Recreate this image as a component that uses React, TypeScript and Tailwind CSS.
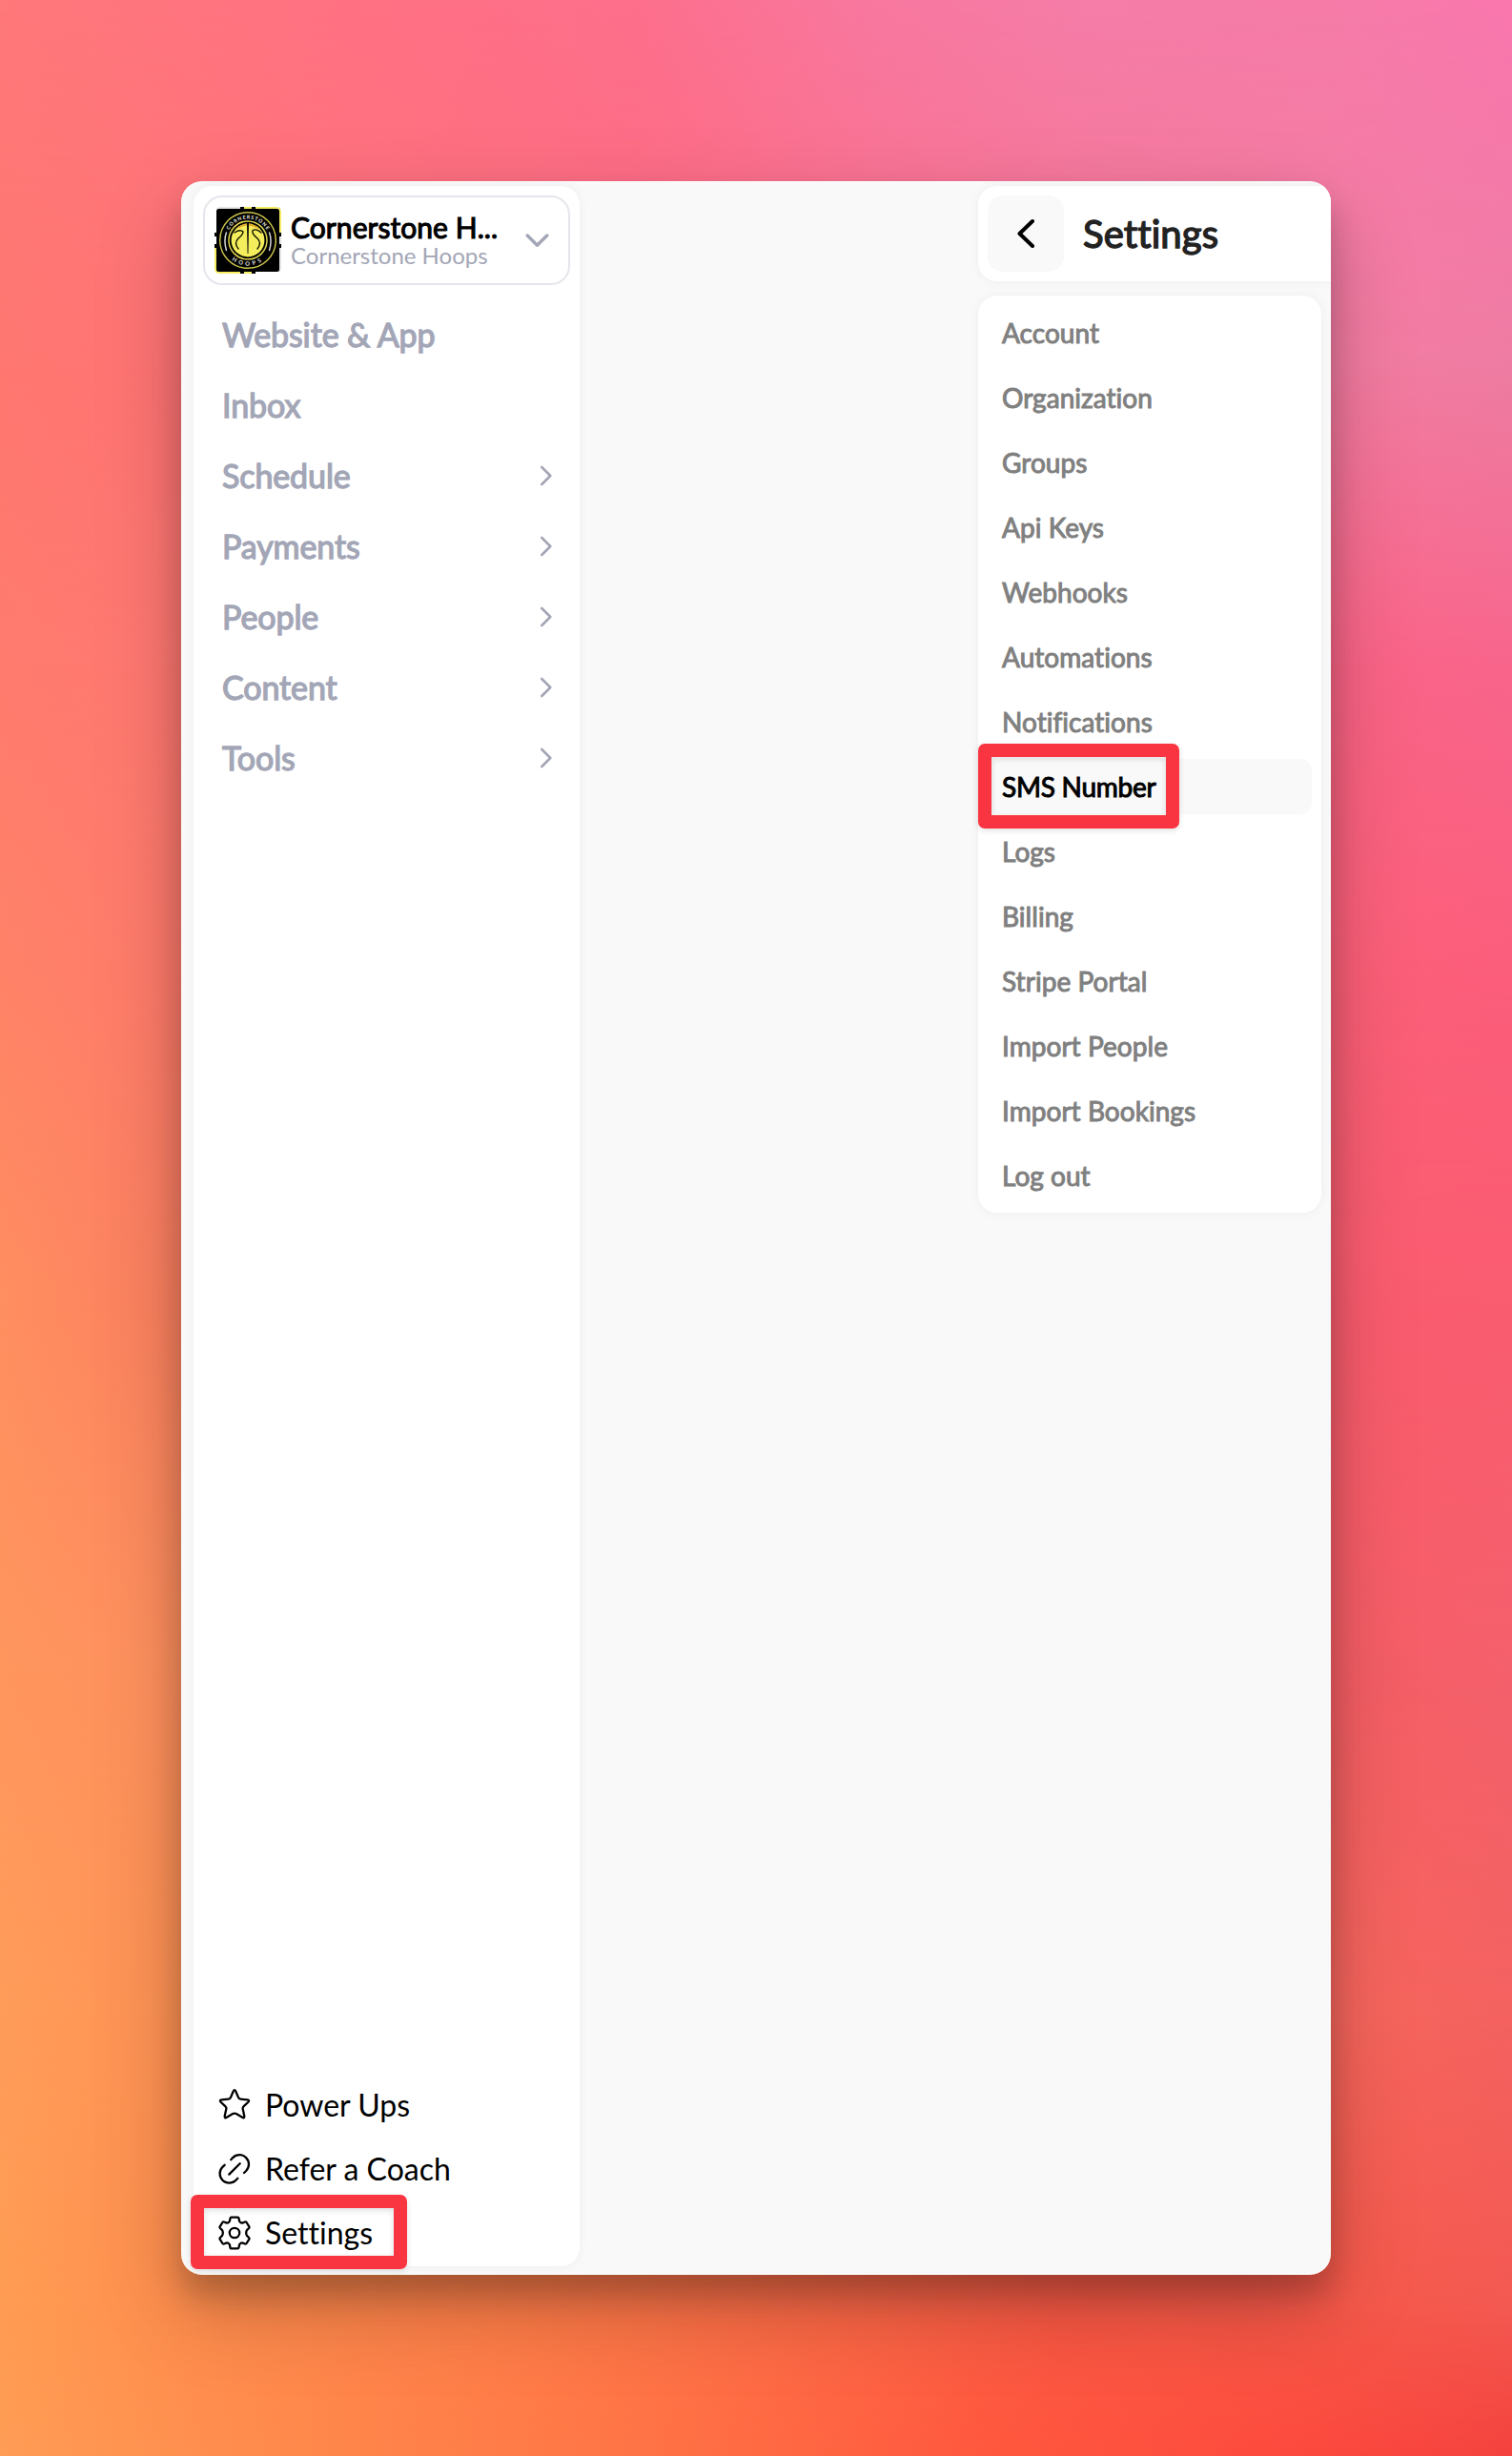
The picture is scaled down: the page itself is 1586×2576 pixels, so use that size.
import type { ReactNode } from "react";

const navItems: { label: string; expandable?: boolean }[] = [
  { label: "Website & App" },
  { label: "Inbox" },
  { label: "Schedule", expandable: true },
  { label: "Payments", expandable: true },
  { label: "People", expandable: true },
  { label: "Content", expandable: true },
  { label: "Tools", expandable: true },
];

const settingsItems = [
  "Account",
  "Organization",
  "Groups",
  "Api Keys",
  "Webhooks",
  "Automations",
  "Notifications",
  "SMS Number",
  "Logs",
  "Billing",
  "Stripe Portal",
  "Import People",
  "Import Bookings",
  "Log out",
];

/* Stacked horizontal gradients, each faded in vertically over the one before. */
function Backdrop() {
  return (
    <div aria-hidden className="absolute inset-0 bg-[linear-gradient(to_right,#ff787a,#ff7184_25%,#fd6f8c_42%,#f878a0_58%,#f57da8_72%,#f67ca8_88%,#fa77ae)]">
      <div className="absolute inset-0 bg-[linear-gradient(to_right,#ff7770,#ff7376_15%,#ff6a80_45%,#f5789a_80%,#f47ca2_88%,#ee7ca2)] [mask-image:linear-gradient(transparent_0%,#000_15%)]" />
      <div className="absolute inset-0 bg-[linear-gradient(to_right,#ff7b6e,#ff7872_12%,#fb6486_88%,#f8658c)] [mask-image:linear-gradient(transparent_15%,#000_27%)]" />
      <div className="absolute inset-0 bg-[linear-gradient(to_right,#ff8268,#ff7a6c_12%,#fc6078_88%,#fb5e7c)] [mask-image:linear-gradient(transparent_27%,#000_39%)]" />
      <div className="absolute inset-0 bg-[linear-gradient(to_right,#ff8e60,#fc8060_12%,#fa5c6e_88%,#fa5c70)] [mask-image:linear-gradient(transparent_39%,#000_53%)]" />
      <div className="absolute inset-0 bg-[linear-gradient(to_right,#ff965e,#ff905e_12%,#f65e64_88%,#f4606c)] [mask-image:linear-gradient(transparent_53%,#000_68%)]" />
      <div className="absolute inset-0 bg-[linear-gradient(to_right,#ff9c5a,#ff9254_12%,#f7665c_88%,#f46260)] [mask-image:linear-gradient(transparent_68%,#000_82%)]" />
      <div className="absolute inset-0 bg-[linear-gradient(to_right,#ff9c52,#ff8e4e_12%,#ff7c48_35%,#fa5844_70%,#f65848_88%,#f35850)] [mask-image:linear-gradient(transparent_82%,#000_95%)]" />
      <div className="absolute inset-0 bg-[linear-gradient(to_right,#ff9c55,#ff8a4c_18%,#ff7446_42%,#ff583e_65%,#fd4a3e_85%,#f4423e)] [mask-image:linear-gradient(transparent_94%,#000_100%)]" />
    </div>
  );
}

function OrgLogo() {
  return (
    <svg viewBox="0 0 70 70" className="size-[70px] shrink-0">
      <rect x="2" y="0" width="68" height="68" rx="4" fill="#e4e4ea" />
      <path d="M28 0H64Q70 0 70 6V27H60V8H28Z" fill="#f5ee62" />
      <path d="M0 43H10V62H42V70H6Q0 70 0 64Z" fill="#f5ee62" />
      <rect x="2" y="2" width="66" height="66" rx="2.5" fill="#000" />
      <path d="M27 0h4v3h-4zM39 0h4v3h-4zM27 67h4v3h-4zM39 67h4v3h-4zM0 27h3v4H0zM0 39h3v4H0zM67 27h3v4h-3zM67 39h3v4h-3z" fill="#000" />
      <path d="M31 0h8v2h-8zM31 68h8v2h-8z" fill="#f5ee62" />
      <circle cx="35" cy="35" r="29.3" fill="none" stroke="#c9c24a" strokeWidth="1.5" />
      <circle cx="35" cy="35" r="20" fill="none" stroke="#d8d04e" strokeWidth="1.5" />
      <circle cx="35" cy="35" r="17.4" fill="#f5ee5c" />
      <path d="M22 23Q35 12 48 23L44 22Q35 17 26 22Z" fill="#e0a92c" />
      <path d="M34 16H36L35.400 49H34.600Z" fill="#000" />
      <path d="M21 27Q27 23 30 26Q30 29 25 33Q20 38 25 44M49 27Q43 22 40 25Q39 28 45 33Q50 38 45 44" fill="none" stroke="#141400" strokeWidth="1.4" strokeLinecap="round" />
      <path d="M12.4 27Q9.5 35 12.4 45.500M57.600 27Q60.500 35 57.600 45.500" fill="none" stroke="#d4d4d4" strokeWidth="1.500" strokeLinecap="round" />
      <path id="logo-top" d="M12.500 35A22.500 22.500 0 0 1 57.500 35" fill="none" />
      <path id="logo-bottom" d="M8.500 35A26.500 26.500 0 0 0 61.500 35" fill="none" />
      <text fill="#e4e4de" fontSize="5.200" fontWeight="900" fontFamily="Lato, sans-serif" textAnchor="middle" textLength="48" lengthAdjust="spacing">
        <textPath href="#logo-top" startOffset="50%">CORNERSTONE</textPath>
      </text>
      <text fill="#d4d4d0" fontSize="6" fontWeight="900" fontFamily="Lato, sans-serif" textAnchor="middle" letterSpacing="3">
        <textPath href="#logo-bottom" startOffset="50%">HOOPS</textPath>
      </text>
    </svg>
  );
}

const outline = { fill: "none", stroke: "currentColor", strokeLinecap: "round", strokeLinejoin: "round" } as const;

function StarIcon() {
  return (
    <svg viewBox="0 0 38 38" className="size-[38px]" {...outline} strokeWidth="2.3">
      <path d="M17.6 4.700Q19 1.700 20.400 4.700L23 10.900Q23.600 12.500 25.400 12.700L32.500 13.400Q35.300 13.900 33.200 16L28.700 20.200Q27.300 21.400 27.700 23.100L29.300 30.500Q29.500 33.200 27.100 31.800L20.800 28.100Q19 27.100 17.200 28.100L10.900 31.800Q8.500 33.200 8.700 30.500L10.300 23.100Q10.700 21.400 9.300 20.200L4.800 16Q2.700 13.900 5.500 13.400L12.600 12.700Q14.400 12.500 15 10.900Z" />
    </svg>
  );
}

function LinkIcon() {
  return (
    <svg viewBox="0 0 38 38" className="size-[38px]" {...outline} strokeWidth="2.3">
      <path d="M15.300 9.200L17.200 7.100A9.800 9.800 0 0 1 31.100 21L29 23M8.600 14.800L6.500 16.800A9.800 9.800 0 0 0 20.400 30.700L22.300 28.800M13.300 24.600L24.700 13.300" />
    </svg>
  );
}

function GearIcon() {
  return (
    <svg viewBox="0 0 38 38" className="size-[38px]" {...outline} strokeWidth="2.300">
      <path d="M15.700 2.600H22.300Q23.300 2.600 23.500 3.600L24 6.300Q24.200 7.300 25.100 7.900Q26.300 8.900 27.600 8.400L30.100 7.500Q31.100 7.200 31.600 8L34.300 12.400Q34.800 13.300 34.100 14L32.200 15.800Q31.200 16.900 31.200 19Q31.200 21.100 32.200 22.200L34.100 24Q34.800 24.700 34.300 25.600L31.600 30Q31.100 30.800 30.100 30.500L27.600 29.600Q26.300 29.100 25.100 30.100Q24.200 30.700 24 31.700L23.500 34.400Q23.300 35.400 22.300 35.400H15.700Q14.700 35.400 14.500 34.400L14 31.700Q13.800 30.700 12.900 30.100Q11.700 29.100 10.400 29.600L7.900 30.500Q6.900 30.800 6.400 30L3.700 25.600Q3.200 24.700 3.900 24L5.800 22.200Q6.800 21.100 6.800 19Q6.800 16.900 5.800 15.800L3.900 14Q3.200 13.300 3.700 12.400L6.400 8Q6.900 7.200 7.900 7.500L10.400 8.400Q11.700 8.900 12.900 7.900Q13.800 7.300 14 6.300L14.500 3.600Q14.700 2.600 15.700 2.600Z" />
      <circle cx="19" cy="19" r="5.200" />
    </svg>
  );
}

function FooterLink({ icon, children }: { icon: ReactNode; children: ReactNode }) {
  return (
    <div className="flex h-[67.200px] items-center gap-[13.500px] pl-[13.500px] text-[32px] leading-none text-black">
      {icon}
      <span>{children}</span>
    </div>
  );
}

function Sidebar() {
  return (
    <aside className="mt-[5px] ml-[13px] flex h-[2182px] w-[405px] flex-col rounded-[20px] bg-white p-2.5 shadow-[0_0_12px_rgba(0,0,0,0.05)]">
      <div className="flex h-[94px] shrink-0 items-center rounded-[20px] border-2 border-[#e5e6ec] pr-[19.500px] pl-2.5">
        <OrgLogo />
        <div className="ml-[10px] flex-1 pb-[3px] whitespace-nowrap">
          <p className="text-[30px] leading-[36px] tracking-[0.060px] text-black [-webkit-text-stroke:1.1px_#000]">Cornerstone H...</p>
          <p className="-mt-0.5 text-2xl leading-[27px] text-[#a3a6b6]">Cornerstone Hoops</p>
        </div>
        <svg viewBox="0 0 25 14" className="mr-px h-3.5 w-[25px] text-[#a3a6b6]" {...outline} strokeWidth="3.400">
          <path d="M2.200 2L12.500 12.200L22.800 2" />
        </svg>
      </div>

      <nav className="mt-[15px] flex flex-col">
        {navItems.map((item) => (
          <div key={item.label} className="flex h-[74px] items-center justify-between pr-[19px] pl-5 text-[#a3a6b6]">
            <span className="text-[34px] leading-none tracking-[-0.100px] [-webkit-text-stroke:1.300px_#a3a6b6]">{item.label}</span>
            {item.expandable && (
              <svg viewBox="0 0 13 22" className="h-[22px] w-[13px]" {...outline} strokeWidth="2.600">
                <path d="M2.300 2L11.300 11L2.300 20" />
              </svg>
            )}
          </div>
        ))}
      </nav>

      <div className="mt-auto -mb-[9px] flex flex-col">
        <FooterLink icon={<StarIcon />}>Power Ups</FooterLink>
        <FooterLink icon={<LinkIcon />}>Refer a Coach</FooterLink>
        <div className="relative">
          <FooterLink icon={<GearIcon />}>Settings</FooterLink>
          <div className="absolute top-[-7px] left-[-13px] h-[78px] w-[227px] rounded-[7px] border-[14px] border-[#fa3542] shadow-[0_2px_6px_rgba(0,0,0,0.12),inset_0_2px_6px_rgba(0,0,0,0.14)]" />
        </div>
      </div>
    </aside>
  );
}

function SettingsPanel() {
  return (
    <section className="ml-auto w-[370px] pt-[5px]">
      <header className="flex h-[100px] items-center rounded-l-[20px] bg-white p-2.5 shadow-[0_0_12px_rgba(0,0,0,0.05)]">
        <button className="flex size-20 items-center justify-center rounded-[16px] bg-[#f9f9f9] text-black">
          <svg viewBox="0 0 20 32" className="h-8 w-5" {...outline} strokeWidth="4">
            <path d="M17 3L3.500 16L17 29" />
          </svg>
        </button>
        <h1 className="ml-5 text-[40px] leading-none tracking-[0.100px] text-[#222] [-webkit-text-stroke:1.4px_#222]">Settings</h1>
      </header>

      <nav className="mt-[15px] flex h-[962px] w-[360px] flex-col gap-2.5 rounded-[20px] bg-white p-2.5 shadow-[0_0_12px_rgba(0,0,0,0.05)]">
        {settingsItems.map((label) =>
          label === "SMS Number" ? (
            <div key={label} className="relative flex h-[58px] items-center rounded-[12px] bg-[#f9f9f9] pl-[15px]">
              <span className="text-[28px] leading-none tracking-[-0.250px] text-black [-webkit-text-stroke:1px_#000]">{label}</span>
              <div className="absolute top-[-16px] left-[-10px] h-[89px] w-[211px] rounded-[7px] border-[14px] border-[#fa3542] shadow-[0_2px_6px_rgba(0,0,0,0.12),inset_0_2px_6px_rgba(0,0,0,0.14)]" />
            </div>
          ) : (
            <div key={label} className="flex h-[58px] items-center pl-[15px]">
              <span className="text-[28px] leading-none tracking-[0.040px] text-[#808080] [-webkit-text-stroke:1px_#808080]">{label}</span>
            </div>
          ),
        )}
      </nav>
    </section>
  );
}

export default function App() {
  return (
    <div className="relative h-[2576px] w-[1586px] overflow-hidden p-[190px] font-[Lato,sans-serif] [font-variant-ligatures:none]">
      <Backdrop />
      <div className="relative h-[2196px] w-[1206px] rounded-[22px] shadow-[0_22px_32px_rgba(0,0,0,0.2),0_36px_90px_rgba(0,0,0,0.22)]">
        <main className="flex h-full items-start overflow-hidden rounded-[22px] bg-[#f9f9f9]">
          <Sidebar />
          <SettingsPanel />
        </main>
      </div>
    </div>
  );
}
